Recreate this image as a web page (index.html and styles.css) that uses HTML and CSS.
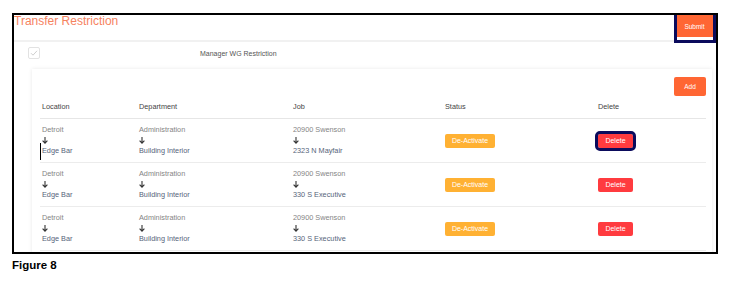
FILE: index.html
```html
<!DOCTYPE html>
<html lang="en">
<head>
  <meta charset="UTF-8">
  <title>Transfer Restriction - Figure 8</title>
  <link rel="stylesheet" href="styles.css">
</head>
<body>

  <!-- Screenshot frame -->
  <div class="frame">
    <div class="top-bar">
      <h1 class="title">Transfer Restriction</h1>
      <button class="btn btn-submit">Submit</button>
      <span class="mark mark-submit"></span>
    </div>

    <div class="option-row">
      <span class="check">
        <svg width="8" height="8" viewBox="0 0 8 8"><path d="M1 4.2 L3 6.2 L7 1.8" fill="none" stroke="#c8c8c8" stroke-width="0.9"/></svg>
      </span>
      <span class="option-label">Manager WG Restriction</span>
    </div>

    <!-- Restriction card -->
    <div class="card">
      <div class="card-actions">
        <button class="btn btn-add">Add</button>
      </div>

      <div class="grid head">
        <div class="cell">Location</div>
        <div class="cell">Department</div>
        <div class="cell">Job</div>
        <div class="cell">Status</div>
        <div class="cell">Delete</div>
      </div>

      <div class="grid row">
        <div class="cell">
          <div class="from">Detroit</div>
          <div class="arrow"><svg width="6" height="7" viewBox="0 0 6 7"><path d="M3 0 V6 M0.6 3.6 L3 6.2 L5.4 3.6" fill="none" stroke="#333" stroke-width="1.1"/></svg></div>
          <div class="to">Edge Bar</div>
          <span class="caret"></span>
        </div>
        <div class="cell">
          <div class="from">Administration</div>
          <div class="arrow"><svg width="6" height="7" viewBox="0 0 6 7"><path d="M3 0 V6 M0.6 3.6 L3 6.2 L5.4 3.6" fill="none" stroke="#333" stroke-width="1.1"/></svg></div>
          <div class="to">Building Interior</div>
        </div>
        <div class="cell">
          <div class="from">20900 Swenson</div>
          <div class="arrow"><svg width="6" height="7" viewBox="0 0 6 7"><path d="M3 0 V6 M0.6 3.6 L3 6.2 L5.4 3.6" fill="none" stroke="#333" stroke-width="1.1"/></svg></div>
          <div class="to">2323 N Mayfair</div>
        </div>
        <div class="cell mid"><button class="btn btn-status">De-Activate</button></div>
        <div class="cell mid"><button class="btn btn-delete marked">Delete</button></div>
      </div>

      <div class="grid row">
        <div class="cell">
          <div class="from">Detroit</div>
          <div class="arrow"><svg width="6" height="7" viewBox="0 0 6 7"><path d="M3 0 V6 M0.6 3.6 L3 6.2 L5.4 3.6" fill="none" stroke="#333" stroke-width="1.1"/></svg></div>
          <div class="to">Edge Bar</div>
        </div>
        <div class="cell">
          <div class="from">Administration</div>
          <div class="arrow"><svg width="6" height="7" viewBox="0 0 6 7"><path d="M3 0 V6 M0.6 3.6 L3 6.2 L5.4 3.6" fill="none" stroke="#333" stroke-width="1.1"/></svg></div>
          <div class="to">Building Interior</div>
        </div>
        <div class="cell">
          <div class="from">20900 Swenson</div>
          <div class="arrow"><svg width="6" height="7" viewBox="0 0 6 7"><path d="M3 0 V6 M0.6 3.6 L3 6.2 L5.4 3.6" fill="none" stroke="#333" stroke-width="1.1"/></svg></div>
          <div class="to">330 S Executive</div>
        </div>
        <div class="cell mid"><button class="btn btn-status">De-Activate</button></div>
        <div class="cell mid"><button class="btn btn-delete">Delete</button></div>
      </div>

      <div class="grid row">
        <div class="cell">
          <div class="from">Detroit</div>
          <div class="arrow"><svg width="6" height="7" viewBox="0 0 6 7"><path d="M3 0 V6 M0.6 3.6 L3 6.2 L5.4 3.6" fill="none" stroke="#333" stroke-width="1.1"/></svg></div>
          <div class="to">Edge Bar</div>
        </div>
        <div class="cell">
          <div class="from">Administration</div>
          <div class="arrow"><svg width="6" height="7" viewBox="0 0 6 7"><path d="M3 0 V6 M0.6 3.6 L3 6.2 L5.4 3.6" fill="none" stroke="#333" stroke-width="1.1"/></svg></div>
          <div class="to">Building Interior</div>
        </div>
        <div class="cell">
          <div class="from">20900 Swenson</div>
          <div class="arrow"><svg width="6" height="7" viewBox="0 0 6 7"><path d="M3 0 V6 M0.6 3.6 L3 6.2 L5.4 3.6" fill="none" stroke="#333" stroke-width="1.1"/></svg></div>
          <div class="to">330 S Executive</div>
        </div>
        <div class="cell mid"><button class="btn btn-status">De-Activate</button></div>
        <div class="cell mid"><button class="btn btn-delete">Delete</button></div>
      </div>
    </div>
  </div>

  <p class="caption">Figure 8</p>

</body>
</html>
```

FILE: styles.css
```css
/* Reset */
* {
  margin: 0;
  padding: 0;
  box-sizing: border-box;
}

body {
  font-family: "Liberation Sans", Arial, sans-serif;
  background: #fff;
  color: #555;
  padding: 13px 0 0 12px;
}

/* Frame around the screenshot */
.frame {
  position: relative;
  width: 706px;
  height: 241px;
  border: 2px solid #000;
  overflow: hidden;
}

.top-bar {
  position: relative;
  display: flex;
  justify-content: space-between;
  align-items: flex-start;
  height: 27px;
  border-bottom: 2px solid #f1f1f1;
}

.title {
  font-size: 12px;
  font-weight: normal;
  line-height: 12px;
  color: #f6835f;
}

.btn {
  border: none;
  color: #fff;
  font-family: inherit;
  cursor: pointer;
}

.btn-submit {
  width: 37px;
  height: 22px;
  margin-right: 3px;
  font-size: 6.5px;
  background: #ff6633;
}

/* Navy annotation boxes */
.mark {
  position: absolute;
  border: 3px solid #0b0b5c;
}

.mark-submit {
  top: -3px;
  right: 0;
  width: 42px;
  height: 31px;
}

.marked {
  outline: 3px solid #0b0b5c;
  outline-offset: 0;
  box-shadow: 2px 0 0 #fff;
}

/* Checkbox row */
.option-row {
  display: flex;
  align-items: center;
  height: 27px;
  padding: 0 0 5px 14px;
}

.check {
  display: flex;
  align-items: center;
  justify-content: center;
  width: 12px;
  height: 12px;
  border: 1px solid #e2e2e2;
  border-radius: 2px;
}

.option-label {
  margin-left: 160px;
  font-size: 7px;
  color: #555;
}

/* Card with the table */
.card {
  margin: 0 4px 0 18px;
  padding: 8px 6px 0 8px;
  background: #fff;
  box-shadow: 0 0 4px rgba(0, 0, 0, 0.09);
  height: 200px;
}

.card-actions {
  display: flex;
  justify-content: flex-end;
}

.btn-add {
  width: 32px;
  height: 19px;
  border-radius: 2px;
  font-size: 6.5px;
  background: #ff6633;
}

.grid {
  display: grid;
  grid-template-columns: 97px 154px 152px 153px 1fr;
}

.head {
  height: 23px;
  align-items: center;
  border-bottom: 1px solid #e6e6e6;
  font-size: 8px;
  color: #444;
}

.row {
  height: 44px;
  border-bottom: 1px solid #ececec;
  padding-top: 6px;
}

.cell {
  position: relative;
  padding-left: 2px;
  font-size: 7.3px;
  line-height: 10.5px;
}

.cell.mid {
  display: flex;
  align-items: center;
  margin-top: -6px;
}

.from {
  color: #858585;
}

.arrow {
  height: 10.5px;
  display: flex;
  align-items: center;
}

.to {
  color: #56647a;
}

/* stray text cursor in the first row */
.caret {
  position: absolute;
  left: 0;
  top: 18px;
  width: 1px;
  height: 17px;
  background: #000;
}

.btn-status {
  width: 50px;
  height: 14px;
  border-radius: 2px;
  font-size: 7px;
  background: #ffb133;
}

.btn-delete {
  width: 35px;
  height: 14px;
  border-radius: 2px;
  font-size: 7px;
  background: #ff3b3f;
}

.caption {
  margin-top: 5px;
  font-size: 11.5px;
  font-weight: bold;
  color: #000;
}
```
